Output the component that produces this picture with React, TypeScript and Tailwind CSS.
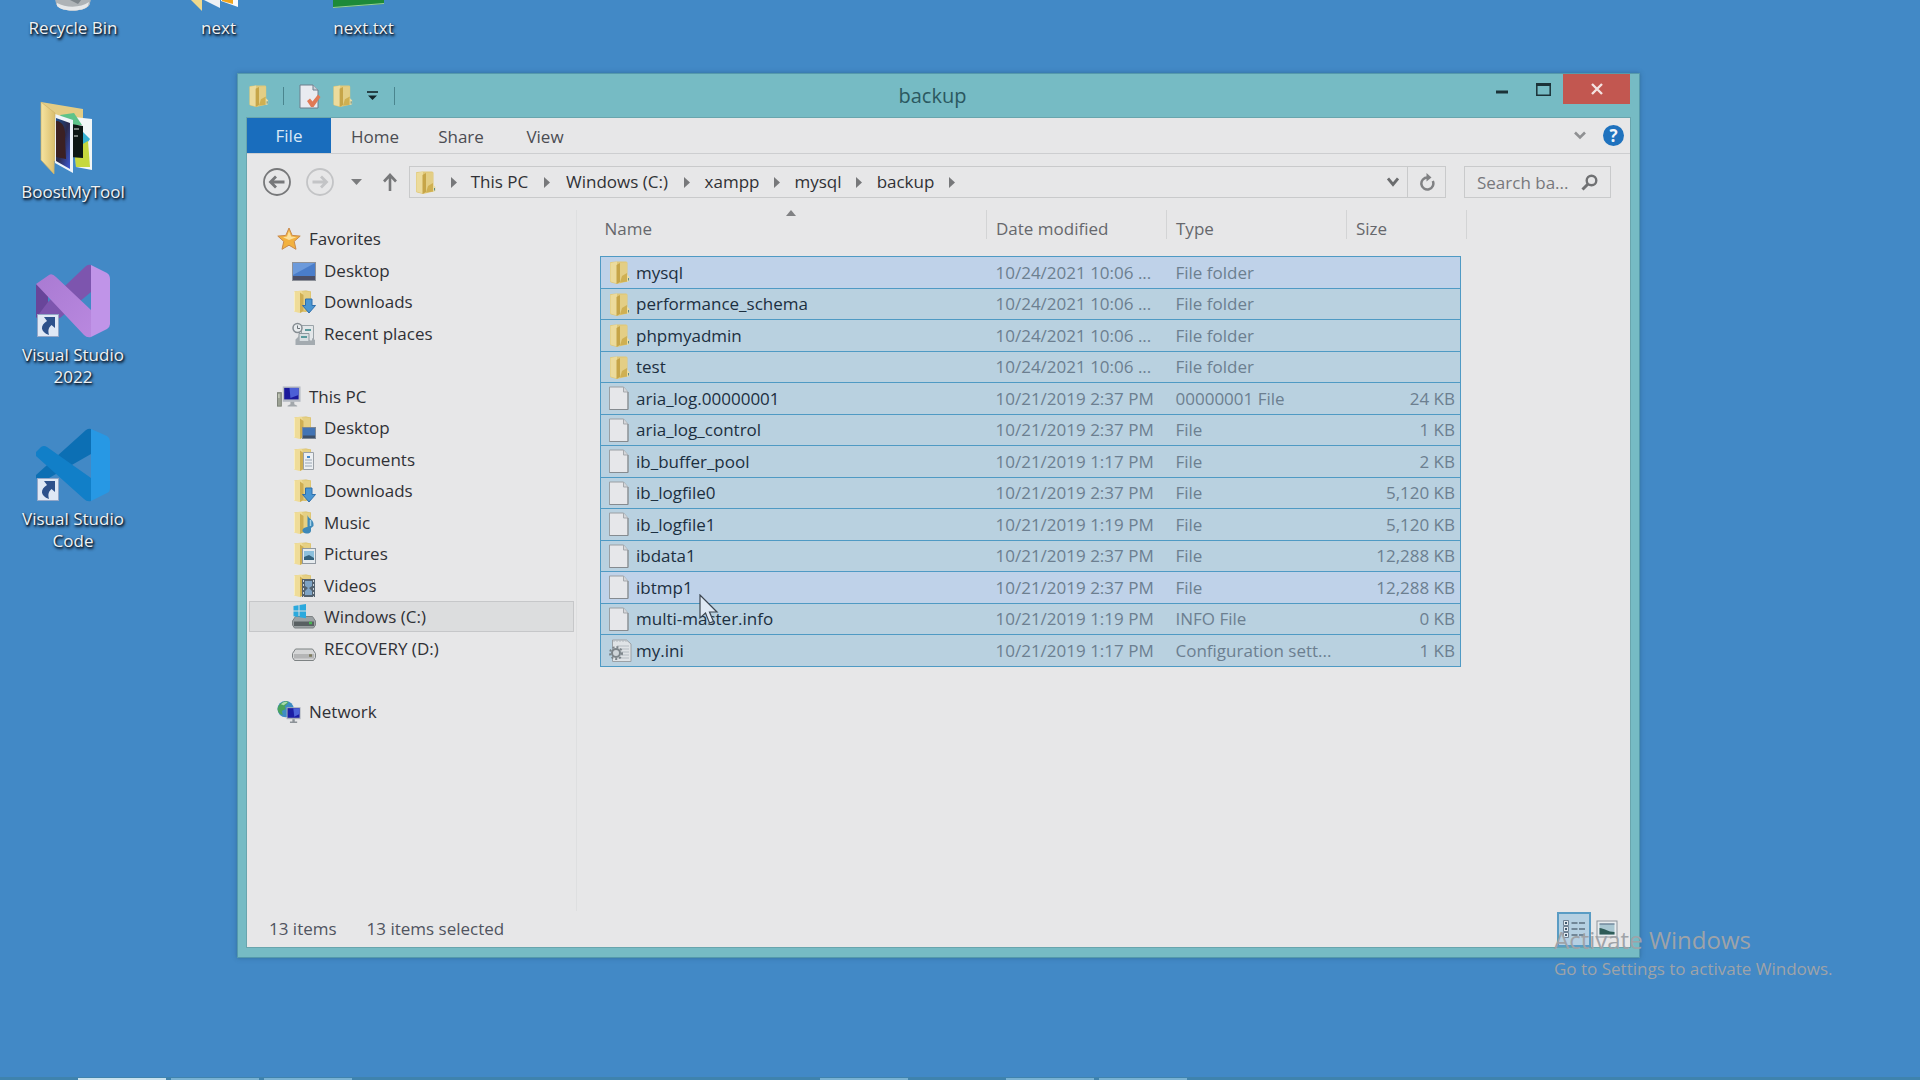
import type { ReactNode } from "react";

type IconProps = { className?: string };

function FolderBase() {
  return (
    <>
      <path d="M3 2.5 14 1.5 19 2.5V21L14 23 3 22Z" fill="#d9bd62" />
      <path d="M9 2 18.5 2.5V20.5L9 22Z" fill="#e6d084" />
      <path d="M2 2.5 9.5 1.5 10.5 4V23L7.5 24 2 22.5Z" fill="#efdc98" />
      <path d="M8 3.5 11.5 6V22L8 24Z" fill="#cfae52" />
      <path d="M2.5 3V22.3" stroke="#f7edc0" />
    </>
  );
}

function FolderIcon({ className = "size-6" }: IconProps) {
  return (
    <svg viewBox="0 0 24 25" className={className} aria-hidden="true">
      <path d="M2 3Q2 2 3 2L9 1.500H18Q19.500 1.500 19.500 3V21.500L9 24 3 22.500Q2 22 2 21Z" fill="#e0c878" />
      <path d="M11 3 19 2.500V21L11 22.500Z" fill="#e3ce85" />
      <path d="M2.500 3 9 1.500V23.500L2.500 21.500Z" fill="#ecdb9c" />
      <path d="M8.500 5 12 3V22L8.500 24Z" fill="#c6a548" />
      <path d="M14 16 19 13V21.500L12 22.500Z" fill="#cfb052" />
      <path d="M19 14.500 21.500 17V21L19 22Z" fill="#e9dca6" />
      <path d="M20.500 18V20.500" stroke="#5c8b8a" />
    </svg>
  );
}

function FileIcon() {
  return (
    <svg viewBox="0 0 22 25" className="h-[25px] w-[22px]" aria-hidden="true">
      <path d="M1.5 1H15.5L20 6V23.5H1.5Z" fill="#e6e7ea" stroke="#9a9fa3" />
      <path d="M15.5 1V6H20" fill="#d4d6da" stroke="#a5a9ad" />
      <path d="M1.5 23.5H20V6" fill="none" stroke="#858b90" />
    </svg>
  );
}

function IniIcon() {
  return (
    <svg viewBox="0 0 25 25" className="h-[25px] w-[25px]" aria-hidden="true">
      <path d="M4.500 2H18.500L23 6V23.500H4.500Z" fill="#dfe3e6" stroke="#9ba1a6" />
      <path d="M6 1v3M9 1v3M12 1v3M15 1v3M18 1v3" stroke="#b3babf" />
      <path d="M9 8h12M9 11h12M12 14h9M12 17h9M9 20h12" stroke="#b5bcc2" />
      <circle cx="8" cy="15" r="4" fill="#cfd5d9" stroke="#7c8489" strokeWidth="2" />
      <circle cx="8" cy="15" r="6" fill="none" stroke="#7c8489" strokeWidth="2" strokeDasharray="2 2" />
    </svg>
  );
}

function StarIcon() {
  return (
    <svg viewBox="0 0 24 24" className="size-6" aria-hidden="true">
      <path d="M12 1 15.200 8.400 23.200 9.100 17.200 14.400 19 22.300 12 18.200 5 22.300 6.800 14.400.8 9.100 8.800 8.400Z" fill="#f2b13f" stroke="#c98a4c" />
      <path d="M12 4 14.200 9.600 19.500 10.200 12 13 6 10.200 10 9.500Z" fill="#fbe09a" />
    </svg>
  );
}

function DesktopIcon() {
  return (
    <svg viewBox="0 0 24 24" className="size-6" aria-hidden="true">
      <rect x=".5" y="3.500" width="23" height="18" fill="#4a7dca" stroke="#8d9199" />
      <path d="M1 4H23L1 16Z" fill="#6c9adb" />
      <rect x="1" y="17" width="22" height="4" fill="#4c4f66" />
    </svg>
  );
}

function LibraryFolder({ children }: { children: ReactNode }) {
  return (
    <svg viewBox="0 0 24 25" className="h-[25px] w-6" aria-hidden="true">
      <FolderBase />
      {children}
    </svg>
  );
}

const DownloadsIcon = () => (
  <LibraryFolder>
    <path d="M13.500 10H20V16.500H23.500L17 24 10.500 16.500H13.500Z" fill="#4a96d2" stroke="#2f6fab" />
  </LibraryFolder>
);
const FolderDesktopIcon = () => (
  <LibraryFolder>
    <rect x="10.500" y="12.500" width="13" height="11" fill="#4274b4" stroke="#7c8794" />
    <path d="M11 20.500H23V23H11Z" fill="#3d5069" />
  </LibraryFolder>
);
const DocumentsIcon = () => (
  <LibraryFolder>
    <path d="M11.500 5.500H21.500V22.500H11.500Z" fill="#eceff2" stroke="#9aa0a6" />
    <path d="M13 13h7M13 16h7M13 19h7" stroke="#9aa6b2" />
    <path d="M15 10h3" stroke="#3e86cc" strokeWidth="2" />
  </LibraryFolder>
);
const MusicIcon = () => (
  <LibraryFolder>
    <path d="M15.500 5C16 9 22.500 9 21.500 16L19 18V21C18 25 10 24 10.500 20 11.500 17 15.500 17 15.500 17Z" fill="#3d88b8" />
    <path d="M18.500 10V16" stroke="#a4d2e8" strokeWidth="1.500" />
  </LibraryFolder>
);
const PicturesIcon = () => (
  <LibraryFolder>
    <rect x="10.500" y="7.500" width="13" height="15" fill="#e6ebee" stroke="#9098a0" />
    <rect x="12" y="10" width="10" height="9" fill="#8cc0dc" />
    <path d="M12 16 17 14 22 17V19H12Z" fill="#33627c" />
  </LibraryFolder>
);
const VideosIcon = () => (
  <LibraryFolder>
    <rect x="10" y="6" width="13" height="18" fill="#53616e" />
    <path d="M13 8H20V13L17 15 20 18V22H13V18L16 15 13 13Z" fill="#7ea3c4" />
    <path d="M21.500 7V24M11.500 7V24" stroke="#cfd6da" strokeDasharray="2 2" />
  </LibraryFolder>
);

function RecentIcon() {
  return (
    <svg viewBox="0 0 24 24" className="size-6" aria-hidden="true">
      <path d="M9.500 3.500H21.500V19H9.500Z" fill="#e3e7e9" stroke="#9aa3a8" />
      <path d="M7 11.500H17V21H7Z" fill="#d8dee1" stroke="#8e989e" />
      <path d="M3.500 17.500 7 14V19H20V16L23 18V23H3.500Z" fill="#a4abb0" />
      <path d="M13 8h6M9 15h6" stroke="#5a9a9c" strokeWidth="2" />
      <circle cx="5.500" cy="6" r="4.500" fill="#e8ebed" stroke="#868d92" strokeWidth="1.500" />
      <path d="M5.500 3.500V6.500H8" stroke="#6b7378" fill="none" />
    </svg>
  );
}

function PcIcon() {
  return (
    <svg viewBox="0 0 25 24" className="size-6" aria-hidden="true">
      <rect x="6" y="1" width="18.500" height="16" fill="#b5bac2" />
      <rect x="7.500" y="2.500" width="15" height="12" fill="#1a189b" />
      <path d="M13 2.500H22.500V10L14 13Z" fill="#4c5fd6" />
      <path d="M14 17H18V19.500L21 21V22H11V21L14 19.500Z" fill="#a2a7ab" />
      <rect x=".5" y="7.500" width="4" height="14" fill="#9ca294" stroke="#7c8277" />
      <path d="M2 9V13" stroke="#dfe5d2" />
    </svg>
  );
}

function NetworkIcon() {
  return (
    <svg viewBox="0 0 25 24" className="size-6" aria-hidden="true">
      <circle cx="9" cy="9" r="8.500" fill="#3e8cc4" />
      <path d="M2 5C6 0 11 0 12 2L8 6 9 9 5 11 6 15 3 14C0 11 0 8 2 5Z" fill="#4ba35c" />
      <path d="M4 4C7 1 10 1 11 2L7 5Z" fill="#a7dcae" />
      <rect x="10" y="7" width="14.500" height="12.500" fill="#a9aeb8" />
      <rect x="11" y="8" width="12.500" height="10" fill="#1b1da4" />
      <path d="M17 8H23.500V14L18 17Z" fill="#4b62d8" />
      <path d="M16 19.500H18.500V22H21V23.500H13.500V22H16Z" fill="#8c9297" />
    </svg>
  );
}

function Drive({ light }: { light?: boolean }) {
  return (
    <>
      <path d="M3.500 12.500H20.500L23.500 17V21L21.500 24H2.500L.5 21V17Z" fill={light ? "#d5d6d7" : "#9ba1a3"} stroke="#7d8283" />
      <path d="M2 17.500H22V22H2Z" fill={light ? "#b4b5b6" : "#596062"} />
      <path d="M17 19H20" stroke={light ? "#7d7a5c" : "#49b653"} strokeWidth="2.500" />
    </>
  );
}

function WindowsDriveIcon() {
  return (
    <svg viewBox="0 0 24 25" className="h-[25px] w-6" aria-hidden="true">
      <Drive />
      <path d="M1.500 2 6.500 1.200V6.500H1.500ZM7.500 1 14 0V6.500H7.500ZM1.500 7.500H6.500V13L1.500 12.200ZM7.500 7.500H14V14.200L7.500 13.200Z" fill="#2ba9dd" />
    </svg>
  );
}

function DriveIcon() {
  return (
    <svg viewBox="0 0 24 25" className="h-[25px] w-6" aria-hidden="true">
      <g transform="translate(0 .5)">
        <Drive light />
      </g>
    </svg>
  );
}

/* ---------- desktop icons ---------- */

function RecycleBinIcon() {
  return (
    <svg viewBox="0 0 74 74" className="size-[74px]" aria-hidden="true">
      <path d="M13 8H61L54 66C53 76 21 76 20 66Z" fill="#d5dbe0" />
      <path d="M18 55H56L54 66C53 76 21 76 20 66Z" fill="#aeb3b6" />
      <path d="M21 66C30 71 45 71 53 65L52 69C47 75 26 75 21 69Z" fill="#e6e8e9" />
      <path d="M36 56 46 62 42 67 34 63Z" fill="#7e868b" />
    </svg>
  );
}

function NextFolderIcon() {
  return (
    <svg viewBox="0 0 74 74" className="size-[74px]" aria-hidden="true">
      <path d="M9 4 20 8V74L9 63Z" fill="#efd98d" />
      <path d="M20 10 38 14V71L20 62Z" fill="#eef1f4" />
      <path d="M39 12H56V70L39 64Z" fill="#fafafa" />
      <path d="M40 14H51V67L40 64Z" fill="#f0a51e" />
    </svg>
  );
}

function NextTextIcon() {
  return (
    <svg viewBox="0 0 74 74" className="size-[74px]" aria-hidden="true">
      <path d="M6 8H57V67L6 71Z" fill="#1d8a38" />
      <path d="M6 70 57 66V67L6 71Z" fill="#9ccf9a" />
    </svg>
  );
}

function BoostFolderIcon() {
  return (
    <svg viewBox="0 0 74 74" className="size-[74px]" aria-hidden="true">
      <defs>
        <linearGradient id="boostCover" x1="0" x2="1">
          <stop offset="0" stopColor="#f6e3a0" />
          <stop offset="1" stopColor="#d9bd6c" />
        </linearGradient>
        <linearGradient id="boostShot" x1="0" y1="0" x2="1" y2="1">
          <stop offset="0" stopColor="#1d4d8c" />
          <stop offset=".5" stopColor="#2c2a4c" />
          <stop offset="1" stopColor="#3c59d8" />
        </linearGradient>
      </defs>
      <path d="M5 1 47 8V20H20V60H18Z" fill="#e3cc84" />
      <path d="M38 16 56 18V69L40 66Z" fill="#f2f6f7" />
      <path d="M24 14 38 12 46 24 30 24Z" fill="#5dc389" />
      <path d="M42 26 54 38 47 48Z" fill="#35b0d2" />
      <path d="M38 48 52 40 54 66 40 66Z" fill="#c6d83e" />
      <path d="M30 22 47 25V57L34 56Z" fill="#0c1614" />
      <path d="M38 28h5M38 35h4" stroke="#dde5e0" />
      <path d="M19 13 37 19V72L19 62Z" fill="#eef4fa" />
      <path d="M20 17 34 22V68L20 60Z" fill="url(#boostShot)" />
      <path d="M20 20C27 20 30 28 29 38L30 58 20 56Z" fill="#3b2023" />
      <path d="M5 1 19 12 18 73 5 59Z" fill="url(#boostCover)" stroke="#cdb169" strokeWidth=".7" />
    </svg>
  );
}

function ShortcutArrow() {
  return (
    <>
      <rect x="1.500" y="50.500" width="21" height="22" fill="#dfe8f5" stroke="#93a7c8" />
      <path d="M8 53H19V64L15.500 61C12 64 12 67 13 71 4 68 4 61 11 57Z" fill="#2d518b" />
    </>
  );
}

function VisualStudioIcon() {
  return (
    <svg viewBox="0 0 74 74" className="size-[74px]" aria-hidden="true">
      <defs>
        <linearGradient id="vsBand" x1="0" y1="0" x2="1" y2="1">
          <stop offset="0" stopColor="#a97ad2" />
          <stop offset="1" stopColor="#b988df" />
        </linearGradient>
      </defs>
      <path d="M0 20 12 30V48L0 54Z" fill="#68459a" />
      <path d="M12 38 50 2Q53 0 55 1V28L24 54 0 54Z" fill="#7d55ae" />
      <path d="M0 20 13 11Q16 9 20 13L55 46V73Q51 74 48 71L0 20Z" fill="url(#vsBand)" />
      <path d="M55 1 71 9Q74 11 74 15V60Q74 63 71 65L55 73Z" fill="#c094e8" />
      <ShortcutArrow />
    </svg>
  );
}

function VSCodeIcon() {
  return (
    <svg viewBox="0 0 74 74" className="size-[74px]" aria-hidden="true">
      <path d="M0 47 50 2Q53 0 55 1V26L6 54 0 50Z" fill="#0c6fb4" />
      <path d="M0 24 5 19Q8 17 11 19L55 50V73Q51 74 48 71L0 28Z" fill="#117fc8" />
      <path d="M55 1 71 8Q74 10 74 14V60Q74 64 71 65L55 73Z" fill="#2798e4" />
      <ShortcutArrow />
    </svg>
  );
}

const desktopIcons: { label: string; icon: ReactNode; place: string }[] = [
  { label: "Recycle Bin", icon: <RecycleBinIcon />, place: "col-start-1 row-start-1" },
  { label: "next", icon: <NextFolderIcon />, place: "col-start-2 row-start-1" },
  { label: "next.txt", icon: <NextTextIcon />, place: "col-start-3 row-start-1" },
  { label: "BoostMyTool", icon: <BoostFolderIcon />, place: "col-start-1 row-start-2" },
  { label: "Visual Studio 2022", icon: <VisualStudioIcon />, place: "col-start-1 row-start-3" },
  { label: "Visual Studio Code", icon: <VSCodeIcon />, place: "col-start-1 row-start-4" },
];

/* ---------- explorer data ---------- */

type NavItem = { label: string; icon: ReactNode; root?: boolean; active?: boolean };

const navItems: (NavItem | null)[] = [
  { label: "Favorites", icon: <StarIcon />, root: true },
  { label: "Desktop", icon: <DesktopIcon /> },
  { label: "Downloads", icon: <DownloadsIcon /> },
  { label: "Recent places", icon: <RecentIcon /> },
  null,
  { label: "This PC", icon: <PcIcon />, root: true },
  { label: "Desktop", icon: <FolderDesktopIcon /> },
  { label: "Documents", icon: <DocumentsIcon /> },
  { label: "Downloads", icon: <DownloadsIcon /> },
  { label: "Music", icon: <MusicIcon /> },
  { label: "Pictures", icon: <PicturesIcon /> },
  { label: "Videos", icon: <VideosIcon /> },
  { label: "Windows (C:)", icon: <WindowsDriveIcon />, active: true },
  { label: "RECOVERY (D:)", icon: <DriveIcon /> },
  null,
  { label: "Network", icon: <NetworkIcon />, root: true },
];

type FileRow = { name: string; date: string; type: string; size: string; hot?: boolean };

const files: FileRow[] = [
  { name: "mysql", date: "10/24/2021 10:06 ...", type: "File folder", size: "", hot: true },
  { name: "performance_schema", date: "10/24/2021 10:06 ...", type: "File folder", size: "" },
  { name: "phpmyadmin", date: "10/24/2021 10:06 ...", type: "File folder", size: "" },
  { name: "test", date: "10/24/2021 10:06 ...", type: "File folder", size: "" },
  { name: "aria_log.00000001", date: "10/21/2019 2:37 PM", type: "00000001 File", size: "24 KB" },
  { name: "aria_log_control", date: "10/21/2019 2:37 PM", type: "File", size: "1 KB" },
  { name: "ib_buffer_pool", date: "10/21/2019 1:17 PM", type: "File", size: "2 KB" },
  { name: "ib_logfile0", date: "10/21/2019 2:37 PM", type: "File", size: "5,120 KB" },
  { name: "ib_logfile1", date: "10/21/2019 1:19 PM", type: "File", size: "5,120 KB" },
  { name: "ibdata1", date: "10/21/2019 2:37 PM", type: "File", size: "12,288 KB" },
  { name: "ibtmp1", date: "10/21/2019 2:37 PM", type: "File", size: "12,288 KB", hot: true },
  { name: "multi-master.info", date: "10/21/2019 1:19 PM", type: "INFO File", size: "0 KB" },
  { name: "my.ini", date: "10/21/2019 1:17 PM", type: "Configuration sett...", size: "1 KB" },
];

function RowIcon({ row }: { row: FileRow }) {
  if (row.type === "File folder") return <FolderIcon className="h-[25px] w-6" />;
  if (row.name.endsWith(".ini")) return <IniIcon />;
  return <FileIcon />;
}

/* ---------- window parts ---------- */

function TitleBar() {
  return (
    <header className="relative flex h-11 shrink-0 items-start">
      <div className="flex h-full items-center">
        <FolderIcon />
        <span className="ml-3 h-[18px] w-px bg-[#4a858e]" />
        <button aria-label="Properties" className="ml-[15px]">
          <svg viewBox="0 0 22 25" className="h-[25px] w-[22px]" aria-hidden="true">
            <path d="M1 1H14L19 6V24H1Z" fill="#e9ebf0" stroke="#6d7f8c" />
            <path d="M14 1V6H19" fill="#c9d0d8" stroke="#6d7f8c" />
            <path d="M8 17 11 14.500 13.500 17.500 19 10.500 21.500 13 14.500 23H12Z" fill="#e07a56" />
          </svg>
        </button>
        <button aria-label="New folder" className="ml-2.5">
          <FolderIcon />
        </button>
        <button aria-label="Customize Quick Access Toolbar" className="ml-3">
          <svg viewBox="0 0 11 10" className="h-[10px] w-[11px]" aria-hidden="true">
            <path d="M0 1H11" stroke="#14252a" strokeWidth="1.600" />
            <path d="M1 4.500H10L5.500 9Z" fill="#14252a" />
          </svg>
        </button>
        <span className="ml-4 h-[18px] w-px bg-[#4a858e]" />
      </div>
      <h1 className="pointer-events-none absolute inset-x-0 top-0 pr-3 text-center text-[20px] leading-[44px] text-[#2b5860]">backup</h1>
      <div className="ml-auto flex items-start">
        <button aria-label="Minimize" className="flex h-[30px] w-[42px] items-center justify-center">
          <svg viewBox="0 0 12 4" className="mt-1.5 h-1 w-3" aria-hidden="true">
            <path d="M0 2H12" stroke="#1b3238" strokeWidth="3" />
          </svg>
        </button>
        <button aria-label="Maximize" className="flex h-[30px] w-[40px] items-center justify-center">
          <svg viewBox="0 0 15 13" className="h-[13px] w-[15px]" aria-hidden="true">
            <path d="M.8 1H14.200V12.200H.8Z" fill="none" stroke="#1b3238" strokeWidth="1.500" />
            <path d="M0 1.500H15" stroke="#1b3238" strokeWidth="3" />
          </svg>
        </button>
        <button aria-label="Close" className="flex h-[30px] w-[67px] items-center justify-center bg-[#c25750]">
          <svg viewBox="0 0 12 12" className="size-3" aria-hidden="true">
            <path d="M1 1 11 11M11 1 1 11" stroke="#f4e3e1" strokeWidth="2.400" />
          </svg>
        </button>
      </div>
    </header>
  );
}

function RibbonTabs() {
  return (
    <nav aria-label="Ribbon" className="flex h-9 shrink-0 items-stretch border-b border-[#cdced0] text-[17px] text-[#4b4c52]">
      <button className="w-[84px] bg-[#196dbd] pt-px text-[#d9e8f6]">File</button>
      <button className="w-[88px] pt-[3px]">Home</button>
      <button className="w-[84px] pt-[3px]">Share</button>
      <button className="w-[84px] pt-[3px]">View</button>
      <div className="ml-auto flex items-center gap-[17px] pr-[6px]">
        <button aria-label="Expand the Ribbon">
          <svg viewBox="0 0 12 9" className="h-[9px] w-3" aria-hidden="true">
            <path d="M1 1.500 6 6.500 11 1.500" fill="none" stroke="#8f9092" strokeWidth="2.600" />
          </svg>
        </button>
        <button aria-label="Help" className="flex size-[21px] items-center justify-center rounded-full bg-[#1f72be] text-[17px] leading-none font-bold text-[#eef4fa]">
          ?
        </button>
      </div>
    </nav>
  );
}

function CircleArrow({ color, flip }: { color: string; flip?: boolean }) {
  return (
    <svg viewBox="0 0 28 28" className={flip ? "size-7 -scale-x-100" : "size-7"} aria-hidden="true">
      <circle cx="14" cy="14" r="13" fill="none" stroke={color} strokeWidth="1.800" />
      <path d="M21.500 14H8.500M13 8.500 7.500 14 13 19.500" fill="none" stroke={color} strokeWidth="2.800" />
    </svg>
  );
}

function Chevron() {
  return (
    <svg viewBox="0 0 6 11" className="h-[11px] w-1.5" aria-hidden="true">
      <path d="M0 0 6 5.500 0 11Z" fill="#77787a" />
    </svg>
  );
}

const crumbs = [
  { label: "This PC", width: "w-[61px]" },
  { label: "Windows (C:)", width: "w-[106px]" },
  { label: "xampp", width: "w-[56px]" },
  { label: "mysql", width: "w-[48px]" },
  { label: "backup", width: "w-[59px]" },
];

function AddressRow() {
  return (
    <div className="flex h-[56px] shrink-0 items-center pr-[19px] pl-4 text-[17px]">
      <button aria-label="Back">
        <CircleArrow color="#77787a" />
      </button>
      <button aria-label="Forward" className="ml-[15px]">
        <CircleArrow color="#c3c4c6" flip />
      </button>
      <button aria-label="Recent locations" className="ml-[17px]">
        <svg viewBox="0 0 11 6" className="h-1.5 w-[11px]" aria-hidden="true">
          <path d="M0 0H11L5.500 6Z" fill="#7b7c7e" />
        </svg>
      </button>
      <button aria-label="Up" className="ml-[21px]">
        <svg viewBox="0 0 14 18" className="h-[18px] w-3.5" aria-hidden="true">
          <path d="M7 18V3M1 8.500 7 2 13 8.500" fill="none" stroke="#77787a" strokeWidth="2.600" />
        </svg>
      </button>
      <div className="ml-3 flex h-8 flex-1 items-stretch border border-[#c9cacb]">
        <ol className="flex flex-1 items-center pl-1 text-[#303135]">
          <li className="flex items-center">
            <FolderIcon className="h-[25px] w-6" />
            <span className="flex w-[31px] justify-center">
              <Chevron />
            </span>
          </li>
          {crumbs.map((c) => (
            <li key={c.label} className="flex items-center">
              <button className={`${c.width} flex justify-center whitespace-nowrap`}>{c.label}</button>
              <span className="flex w-[34px] justify-center">
                <Chevron />
              </span>
            </li>
          ))}
        </ol>
        <button aria-label="Previous locations" className="flex w-7 items-center justify-center">
          <svg viewBox="0 0 12 10" className="h-[10px] w-3" aria-hidden="true">
            <path d="M1 1.500 6 7.500 11 1.500" fill="none" stroke="#6b6c6e" strokeWidth="2.800" />
          </svg>
        </button>
        <button aria-label="Refresh" className="flex w-[38px] items-center justify-center border-l border-[#c9cacb]">
          <svg viewBox="0 0 16 18" className="h-[18px] w-4" aria-hidden="true">
            <path d="M8.500 4.500A6 6 0 1 0 13.800 8" fill="none" stroke="#808183" strokeWidth="2.500" />
            <path d="M7.500 0 12.500 4.500 7.500 8.500Z" fill="#808183" />
          </svg>
        </button>
      </div>
      <div className="ml-[18px] flex h-8 w-[147px] items-center border border-[#c9cacb] pr-3">
        <input
          type="text"
          aria-label="Search backup"
          placeholder="Search ba..."
          className="h-full min-w-0 flex-1 bg-transparent pl-3 text-[17px] outline-none placeholder:text-[#77787c]"
        />
        <svg viewBox="0 0 17 17" className="size-[17px] shrink-0" aria-hidden="true">
          <circle cx="10.500" cy="6.500" r="4.800" fill="none" stroke="#707173" strokeWidth="2.400" />
          <path d="M7 10 1.500 15.500" stroke="#707173" strokeWidth="3" />
        </svg>
      </div>
    </div>
  );
}

function Sidebar() {
  return (
    <nav aria-label="Folders" className="w-[330px] shrink-0 border-r border-[#dedfe0] px-[2px] pt-[13px]">
      <ul className="text-[17px] text-[#303136]">
        {navItems.map((item, i) => (
          <li key={i} className="odd:h-8 even:h-[31px]">
            {item && (
              <a
                href="#"
                className={`flex h-[31px] items-center gap-2 border ${item.active ? "border-[#c6c7c9] bg-[#dcddde]" : "border-transparent"} ${
                  item.root ? "pl-[27px]" : "pl-[42px]"
                }`}
              >
                {item.icon}
                <span>{item.label}</span>
              </a>
            )}
          </li>
        ))}
      </ul>
    </nav>
  );
}

function FileTable() {
  return (
    <main className="min-w-0 flex-1 pl-[23px]">
      <table className="w-[866px] table-fixed border-collapse text-left text-[17px]">
        <colgroup>
          <col className="w-[386px]" />
          <col className="w-[180px]" />
          <col className="w-[180px]" />
          <col className="w-[114px]" />
          <col className="w-[6px]" />
        </colgroup>
        <thead className="text-[#66676c]">
          <tr className="h-[29px]">
            <th className="relative border-r border-[#d3d4d5] p-0 pt-[9px] pl-1 leading-[20px] font-normal">
              Name
              <svg viewBox="0 0 10 6" className="absolute top-0 left-[185px] h-1.5 w-2.5" aria-hidden="true">
                <path d="M5 0 10 6H0Z" fill="#808183" />
              </svg>
            </th>
            <th className="border-r border-[#d3d4d5] p-0 pt-[9px] pl-[9px] leading-[20px] font-normal">Date modified</th>
            <th className="border-r border-[#d3d4d5] p-0 pt-[9px] pl-[9px] leading-[20px] font-normal">Type</th>
            <th colSpan={2} className="border-r border-[#d3d4d5] p-0 pt-[9px] pl-[9px] leading-[20px] font-normal">
              Size
            </th>
          </tr>
        </thead>
        <tbody className="text-[#6c7f90] before:block before:h-[17px]">
          {files.map((f) => (
            <tr
              key={f.name}
              className={`odd:h-8 even:h-[31px] ${f.hot ? "bg-[#bfd2e9]" : "bg-[#b9d1e0]"}`}
            >
              <td className="border-y border-l border-[#4f9ac4] p-0 pl-[7px]">
                <span className="flex h-[29px] items-center text-[#1c2f40]">
                  <span className="flex w-7 justify-start">
                    <RowIcon row={f} />
                  </span>
                  {f.name}
                </span>
              </td>
              <td className="border-y border-[#4f9ac4] p-0 pl-[9px] whitespace-nowrap">{f.date}</td>
              <td className="border-y border-[#4f9ac4] p-0 pl-[9px] whitespace-nowrap">{f.type}</td>
              <td className="border-y border-r border-[#4f9ac4] p-0 pr-[5px] text-right whitespace-nowrap">{f.size}</td>
              <td className="bg-[#e7e7e8]" />
            </tr>
          ))}
        </tbody>
      </table>
    </main>
  );
}

function StatusBar() {
  return (
    <footer className="flex h-9 shrink-0 items-center pr-[12px] pl-[22px] text-[17px] text-[#50545f]">
      <span>13 items</span>
      <span className="ml-[30px]">13 items selected</span>
      <div className="ml-auto flex items-center gap-[5px]">
        <button aria-label="Details view" className="flex h-[35px] w-[34px] items-center justify-center border-2 border-[#5a9cc4] bg-[#b5d0e2]">
          <svg viewBox="0 0 24 20" className="h-5 w-6" aria-hidden="true">
            <path d="M1.500 1.500h5v5h-5ZM1.500 7.500h5v5h-5ZM1.500 13.500h5v5h-5Z" fill="#e3eaf0" stroke="#6f8294" />
            <path d="M3 4h2M3 10h2M3 16h2" stroke="#415a70" strokeWidth="2" />
            <path d="M9.500 4H23.500M9.500 10H23.500M9.500 16H23.500" stroke="#5c6f80" strokeWidth="1.600" strokeDasharray="6 1.500" />
          </svg>
        </button>
        <button aria-label="Large icons view">
          <svg viewBox="0 0 22 20" className="h-5 w-[22px]" aria-hidden="true">
            <rect x="1" y="2" width="20" height="16" fill="#e8ecef" stroke="#8d949b" />
            <rect x="3.500" y="4.500" width="15" height="11" fill="#a9c7d2" />
            <path d="M3.500 9C8 9 12 13 18.500 13V15.500H3.500Z" fill="#2f5c58" />
            <path d="M3.500 5H18.500" stroke="#566b83" />
          </svg>
        </button>
      </div>
    </footer>
  );
}

export default function App() {
  return (
    <div className="relative h-screen overflow-hidden bg-[#4289c6] font-['Open_Sans','Noto_Sans',sans-serif]">
      <ul className="-mt-[63px] grid grid-cols-[146px_145px_145px] grid-rows-[164px_163px_164px_164px] justify-start">
        {desktopIcons.map((d) => (
          <li key={d.label} className={`${d.place} flex justify-center`}>
            <button className="flex w-[118px] flex-col items-center gap-[6px] text-[17px] leading-[22px] text-[#eef2f6] [text-shadow:1px_1px_2px_#0a1626,1px_2px_3px_#0a1626]">
              {d.icon}
              <span>{d.label}</span>
            </button>
          </li>
        ))}
      </ul>

      <section aria-label="backup" className="absolute top-[73px] right-[280px] bottom-[122px] left-[237px] flex flex-col border border-[#5599ac] bg-[#76bbc4] px-[9px] pb-[10px] shadow-[0_0_4px_rgba(30,80,110,0.5)]">
        <TitleBar />
        <div className="flex min-h-0 flex-1 flex-col bg-[#e7e7e8] outline outline-[#69a5ad]">
          <RibbonTabs />
          <AddressRow />
          <div className="flex min-h-0 flex-1">
            <Sidebar />
            <FileTable />
          </div>
          <StatusBar />
        </div>
      </section>

      <svg viewBox="0 0 20 32" className="absolute top-[594px] left-[699px] h-8 w-5" aria-hidden="true">
        <path d="M1 1V24L6.500 19 10.500 29 14.500 27.500 10.500 18H18Z" fill="#dfe9f4" stroke="#3d4650" strokeWidth="1.200" />
      </svg>

      <aside className="absolute right-[82px] bottom-[97px] w-[284px] text-[#9fa3a8]">
        <p className="text-[24px] leading-[30px]">Activate Windows</p>
        <p className="text-[17px] leading-[28px] whitespace-nowrap">Go to Settings to activate Windows.</p>
      </aside>

      <div className="absolute inset-x-0 bottom-0 flex h-[3px] items-end gap-[5px] bg-[#3f83ad] pl-[78px]">
        <span className="h-0.5 w-[88px] bg-[#c9e2ee]" />
        <span className="h-0.5 w-[88px] bg-[#79b2d2]" />
        <span className="h-0.5 w-[88px] bg-[#79b2d2]" />
        <span className="ml-[463px] h-0.5 w-[88px] bg-[#79b2d2]" />
        <span className="ml-[93px] h-0.5 w-[88px] bg-[#79b2d2]" />
        <span className="h-0.5 w-[88px] bg-[#79b2d2]" />
      </div>
    </div>
  );
}
